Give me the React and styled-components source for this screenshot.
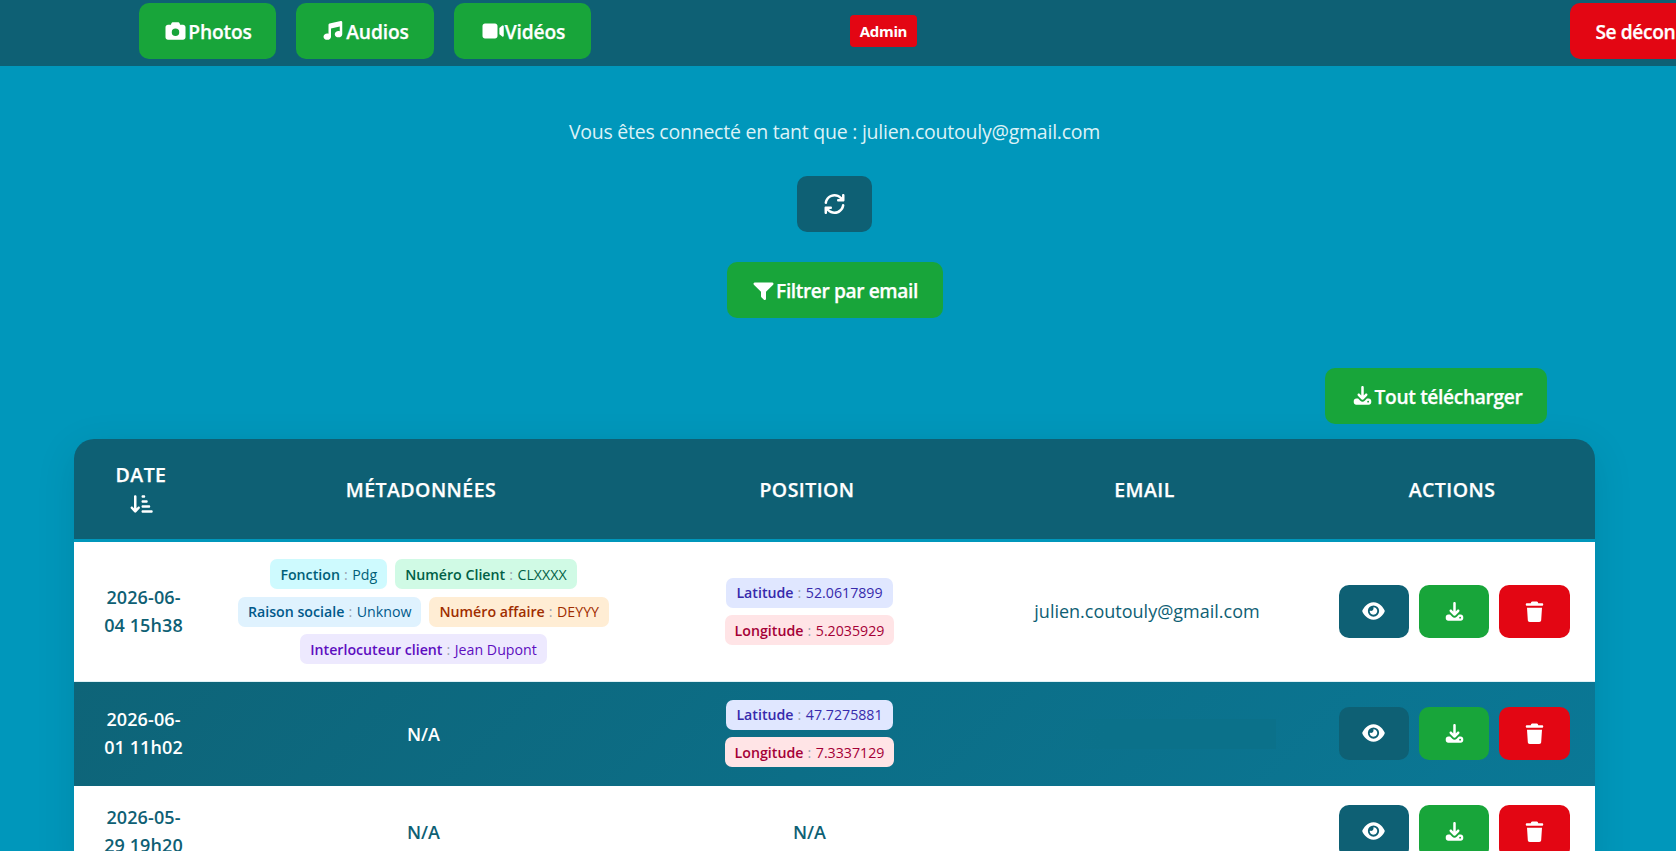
import styled, { createGlobalStyle } from "styled-components";
import { FaArrowDownShortWide, FaCamera, FaEye } from "react-icons/fa6";

const GlobalStyle = createGlobalStyle`
  * {
    box-sizing: border-box;
  }
  body {
    margin: 0;
    height: 851px;
    overflow: hidden;
    background: #0097bb;
    font-family: "Open Sans", "Noto Sans", sans-serif;
  }
`;

const Page = styled.div`
  width: 1676px;
  height: 851px;
  overflow: hidden;
  background: #0097bb;
`;

const Header = styled.header`
  display: flex;
  align-items: flex-start;
  height: 66px;
  padding: 3px 0 0 139px;
  background: #0e6074;
`;

const Nav = styled.nav`
  display: flex;
  gap: 20px;
`;

const colors = {
  green: "#18a53a",
  red: "#e30613",
  dark: "#0e6074",
};

const Button = styled.button`
  display: flex;
  align-items: center;
  justify-content: center;
  flex-shrink: 0;
  width: ${(props) => props.$width}px;
  height: ${(props) => props.$height || 56}px;
  padding: 0;
  border: 0;
  border-radius: 10px;
  background: ${(props) => colors[props.$color || "green"]};
  color: #fff;
  font-family: inherit;
  font-size: 19.2px;
  font-weight: 600;
  letter-spacing: ${(props) => props.$spacing || -0.15}px;
  white-space: nowrap;
  -webkit-text-stroke: 0.25px #fff;

  svg {
    flex-shrink: 0;
    height: 20px;
    width: 25px;
    overflow: visible;
  }
`;

const ButtonText = styled.span`
  padding-top: 1px;
  line-height: 27px;
`;

const AdminTag = styled.span`
  display: flex;
  align-items: center;
  justify-content: center;
  width: 67px;
  height: 32px;
  margin: 12px 653px 0 259px;
  flex-shrink: 0;
  border-radius: 4px;
  background: #e30613;
  color: #fff;
  font-size: 15px;
  font-weight: 700;
  letter-spacing: -0.35px;
`;

const Main = styled.main`
  width: 1521px;
  margin-left: 74px;
  padding-top: 52px;
`;

const Top = styled.div`
  display: flex;
  flex-direction: column;
  align-items: center;
`;

const Connected = styled.p`
  margin: 0 0 30px;
  height: 28px;
  line-height: 28px;
  color: #dcf2f7;
  font-size: 19.5px;
  letter-spacing: -0.24px;
  white-space: nowrap;
`;

const FilterBar = styled.div`
  margin: 30px 0 50px;
`;

const DownloadBar = styled.div`
  display: flex;
  justify-content: flex-end;
  padding-right: 48px;
  margin-bottom: 15px;
`;

const TableCard = styled.div`
  overflow: hidden;
  border-radius: 20px;
  box-shadow: 0 10px 40px rgba(0, 0, 0, 0.1);
`;

const Table = styled.table`
  width: 100%;
  table-layout: fixed;
  border-collapse: separate;
  border-spacing: 0;
`;

const Col = styled.col`
  width: ${(props) => props.$width}px;
`;

const Th = styled.th`
  height: 103px;
  padding: ${(props) => (props.$last ? "0" : "0 5px 0 0")};
  background: #0e6074;
  border-bottom: 3px solid #0097bb;
  color: #fff;
  font-size: 19.5px;
  font-weight: 600;
  line-height: 29px;
  letter-spacing: 0.45px;
  text-transform: uppercase;
  -webkit-text-stroke: 0.25px #fff;

  svg {
    display: block;
    margin: 5px auto 4px;
    height: 20px;
    width: 23px;
  }
`;

const Row = styled.tr`
  height: ${(props) => props.$height}px;
  color: ${(props) => (props.$dark ? "#fff" : "#0e6074")};
  background: ${(props) =>
    props.$dark ? "linear-gradient(135deg, #0e6478, #0a7896)" : "#fff"};
`;

const Td = styled.td`
  padding: 0;
  border-bottom: 1px solid ${(props) => (props.$dark ? "transparent" : "#e0f1f5")};
  text-align: center;
  vertical-align: middle;
  font-size: ${(props) => props.$size || 18}px;
  font-weight: ${(props) => props.$weight || 600};
  line-height: 28px;
`;

const DateText = styled.div`
  width: 84px;
  margin: 0 auto;
  padding-bottom: 2px;
  letter-spacing: 0.1px;
`;

const EmailText = styled.div`
  padding-bottom: 2px;
`;

const Badges = styled.div`
  display: flex;
  flex-wrap: wrap;
  justify-content: center;
  flex-direction: ${(props) => (props.$column ? "column" : "row")};
  align-items: center;
  gap: 7.5px 8px;
  width: 380px;
  max-width: 100%;
  margin: 0 auto;
`;

const palettes = {
  cyan: ["#cefafe", "#005f78"],
  emerald: ["#d0fae5", "#006045"],
  sky: ["#dff2fe", "#00598a"],
  orange: ["#ffedd4", "#9f2d00"],
  violet: ["#ede9fe", "#5d0ec0"],
  indigo: ["#e0e7ff", "#372aac"],
  rose: ["#ffe4e6", "#a50036"],
};

const Badge = styled.span`
  display: flex;
  align-items: center;
  height: 30px;
  padding: 1px 10px 0;
  border-radius: 7px;
  background: ${(props) => palettes[props.$tone][0]};
  color: ${(props) => palettes[props.$tone][1]};
  font-size: 14.2px;
  font-weight: 400;
  line-height: 22px;
  white-space: pre;
`;

const Label = styled.span`
  font-weight: 600;
`;

const Separator = styled.span`
  color: #99a1af;
  letter-spacing: 0.4px;
`;

const HiddenEmail = styled.div`
  width: 244px;
  height: 30px;
  margin: 0 auto 0 47px;
  background: linear-gradient(90deg, transparent, #0b718a 30%);
`;

const Actions = styled.div`
  display: flex;
  gap: 10px;
  padding-left: 30px;
`;

const ViewIcon = styled(FaEye)`
  margin: 0 1px 1px 0;
`;

function Icon({ width = 512, d }) {
  return (
    <svg viewBox={`0 0 ${width} 512`} fill="currentColor">
      <path d={d} />
    </svg>
  );
}

const MusicIcon = () => (
  <Icon d="M468 7c7.6 6.1 12 15.3 12 25l0 304c0 44.2-43 80-96 80s-96-35.8-96-80 43-80 96-80c11.2 0 22 1.6 32 4.6l0-116.7-224 49.8 0 206.3c0 44.2-43 80-96 80s-96-35.8-96-80 43-80 96-80c11.2 0 22 1.6 32 4.6L128 96c0-15 10.4-28 25.1-31.2l288-64c9.5-2.1 19.4 .2 27 6.3z" />
);

const VideoIcon = () => (
  <Icon
    width={576}
    d="M96 64c-35.3 0-64 28.7-64 64l0 256c0 35.3 28.7 64 64 64l256 0c35.3 0 64-28.7 64-64l0-256c0-35.3-28.7-64-64-64L96 64zM464 336l73.5 58.8c4.2 3.4 9.4 5.2 14.8 5.2 13.1 0 23.7-10.6 23.7-23.7l0-240.6c0-13.1-10.6-23.7-23.7-23.7-5.4 0-10.6 1.8-14.8 5.2L464 176l0 160z"
  />
);

const RefreshIcon = () => (
  <Icon d="M65.9 228.5c13.3-93 93.4-164.5 190.1-164.5 53 0 101 21.5 135.8 56.2 .2 .2 .4 .4 .6 .6l7.6 7.2-47.9 0c-17.7 0-32 14.3-32 32s14.3 32 32 32l128 0c17.7 0 32-14.3 32-32l0-128c0-17.7-14.3-32-32-32s-32 14.3-32 32l0 53.4-11.3-10.7C390.5 28.6 326.5 0 256 0 127 0 20.3 95.4 2.6 219.5 .1 237 12.2 253.2 29.7 255.7s33.7-9.7 36.2-27.1zm443.5 64c2.5-17.5-9.7-33.7-27.1-36.2s-33.7 9.7-36.2 27.1c-13.3 93-93.4 164.5-190.1 164.5-53 0-101-21.5-135.8-56.2-.2-.2-.4-.4-.6-.6l-7.6-7.2 47.9 0c17.7 0 32-14.3 32-32s-14.3-32-32-32L32 320c-8.5 0-16.7 3.4-22.7 9.5S-.1 343.7 0 352.3l1 127c.1 17.7 14.6 31.9 32.3 31.7S65.2 496.4 65 478.7l-.4-51.5 10.7 10.1c46.3 46.1 110.2 74.7 180.7 74.7 129 0 235.7-95.4 253.4-219.5z" />
);

const FilterIcon = () => (
  <Icon d="M32 64C19.1 64 7.4 71.8 2.4 83.8S.2 109.5 9.4 118.6L192 301.3 192 416c0 8.5 3.4 16.6 9.4 22.6l64 64c9.2 9.2 22.9 11.9 34.9 6.9S320 492.9 320 480l0-178.7 182.6-182.6c9.2-9.2 11.9-22.9 6.9-34.9S492.9 64 480 64L32 64z" />
);

const DownloadIcon = () => (
  <Icon
    width={448}
    d="M256 32c0-17.7-14.3-32-32-32s-32 14.3-32 32l0 210.7-41.4-41.4c-12.5-12.5-32.8-12.5-45.3 0s-12.5 32.8 0 45.3l96 96c12.5 12.5 32.8 12.5 45.3 0l96-96c12.5-12.5 12.5-32.8 0-45.3s-32.8-12.5-45.3 0L256 242.7 256 32zM64 320c-35.3 0-64 28.7-64 64l0 32c0 35.3 28.7 64 64 64l320 0c35.3 0 64-28.7 64-64l0-32c0-35.3-28.7-64-64-64l-46.9 0-56.6 56.6c-31.2 31.2-81.9 31.2-113.1 0L110.9 320 64 320zm304 56a24 24 0 1 1 0 48 24 24 0 1 1 0-48z"
  />
);

const TrashIcon = () => (
  <Icon
    width={448}
    d="M136.7 5.9L128 32 32 32C14.3 32 0 46.3 0 64S14.3 96 32 96l384 0c17.7 0 32-14.3 32-32s-14.3-32-32-32l-96 0-8.7-26.1C306.9-7.2 294.7-16 280.9-16L167.1-16c-13.8 0-26 8.8-30.4 21.9zM416 144L32 144 53.1 467.1C54.7 492.4 75.7 512 101 512L347 512c25.3 0 46.3-19.6 47.9-44.9L416 144z"
  />
);

const rows = [
  {
    date: "2026-06-04 15h38",
    height: 140,
    meta: [
      ["cyan", "Fonction", "Pdg"],
      ["emerald", "Numéro Client", "CLXXXX"],
      ["sky", "Raison sociale", "Unknow"],
      ["orange", "Numéro affaire", "DEYYY"],
      ["violet", "Interlocuteur client", "Jean Dupont"],
    ],
    position: [
      ["indigo", "Latitude", "52.0617899"],
      ["rose", "Longitude", "5.2035929"],
    ],
    email: <EmailText>julien.coutouly@gmail.com</EmailText>,
  },
  {
    date: "2026-06-01 11h02",
    height: 104,
    dark: true,
    position: [
      ["indigo", "Latitude", "47.7275881"],
      ["rose", "Longitude", "7.3337129"],
    ],
    email: <HiddenEmail />,
  },
  { date: "2026-05-29 19h20", height: 92 },
];

function BadgeList({ items, column }) {
  if (!items) return "N/A";
  return (
    <Badges $column={column}>
      {items.map(([tone, label, value]) => (
        <Badge key={label} $tone={tone}>
          <Label>{label}</Label>
          <Separator> : </Separator>
          {value}
        </Badge>
      ))}
    </Badges>
  );
}

// "2026-06-04 15h38" breaks after the month
function formatDate(date) {
  return (
    <>
      {date.slice(0, 8)}
      <br />
      {date.slice(8)}
    </>
  );
}

export default function App() {
  return (
    <Page>
      <GlobalStyle />
      <Header>
        <Nav>
          <Button $width={137}>
            <FaCamera />
            <ButtonText>Photos</ButtonText>
          </Button>
          <Button $width={138}>
            <MusicIcon />
            <ButtonText>Audios</ButtonText>
          </Button>
          <Button $width={137}>
            <VideoIcon />
            <ButtonText>Vidéos</ButtonText>
          </Button>
        </Nav>
        <AdminTag>Admin</AdminTag>
        <Button $color="red" $width={188} $spacing={-0.4}>
          <ButtonText>Se déconnecter</ButtonText>
        </Button>
      </Header>
      <Main>
        <Top>
          <Connected>
            Vous êtes connecté en tant que : julien.coutouly@gmail.com
          </Connected>
          <Button $color="dark" $width={75}>
            <RefreshIcon />
          </Button>
          <FilterBar>
            <Button $width={216} $spacing={-0.4}>
              <FilterIcon />
              <ButtonText>Filtrer par email</ButtonText>
            </Button>
          </FilterBar>
        </Top>
        <DownloadBar>
          <Button $width={222} $spacing={-0.35}>
            <DownloadIcon />
            <ButtonText>Tout télécharger</ButtonText>
          </Button>
        </DownloadBar>
        <TableCard>
          <Table>
            <colgroup>
              <Col $width={139} />
              <Col $width={421} />
              <Col $width={351} />
              <Col $width={324} />
              <Col $width={286} />
            </colgroup>
            <thead>
              <tr>
                <Th>
                  Date
                  <FaArrowDownShortWide />
                </Th>
                <Th>Métadonnées</Th>
                <Th>Position</Th>
                <Th>Email</Th>
                <Th $last>Actions</Th>
              </tr>
            </thead>
            <tbody>
              {rows.map((row) => (
                <Row key={row.date} $height={row.height} $dark={row.dark}>
                  <Td $dark={row.dark}>
                    <DateText>{formatDate(row.date)}</DateText>
                  </Td>
                  <Td $dark={row.dark}>
                    <BadgeList items={row.meta} />
                  </Td>
                  <Td $dark={row.dark}>
                    <BadgeList items={row.position} column />
                  </Td>
                  <Td $dark={row.dark} $size={18} $weight={400}>
                    {row.email}
                  </Td>
                  <Td $dark={row.dark}>
                    <Actions>
                      <Button $color="dark" $width={70} $height={53}>
                        <ViewIcon />
                      </Button>
                      <Button $width={70} $height={53}>
                        <DownloadIcon />
                      </Button>
                      <Button $color="red" $width={71} $height={53}>
                        <TrashIcon />
                      </Button>
                    </Actions>
                  </Td>
                </Row>
              ))}
            </tbody>
          </Table>
        </TableCard>
      </Main>
    </Page>
  );
}
